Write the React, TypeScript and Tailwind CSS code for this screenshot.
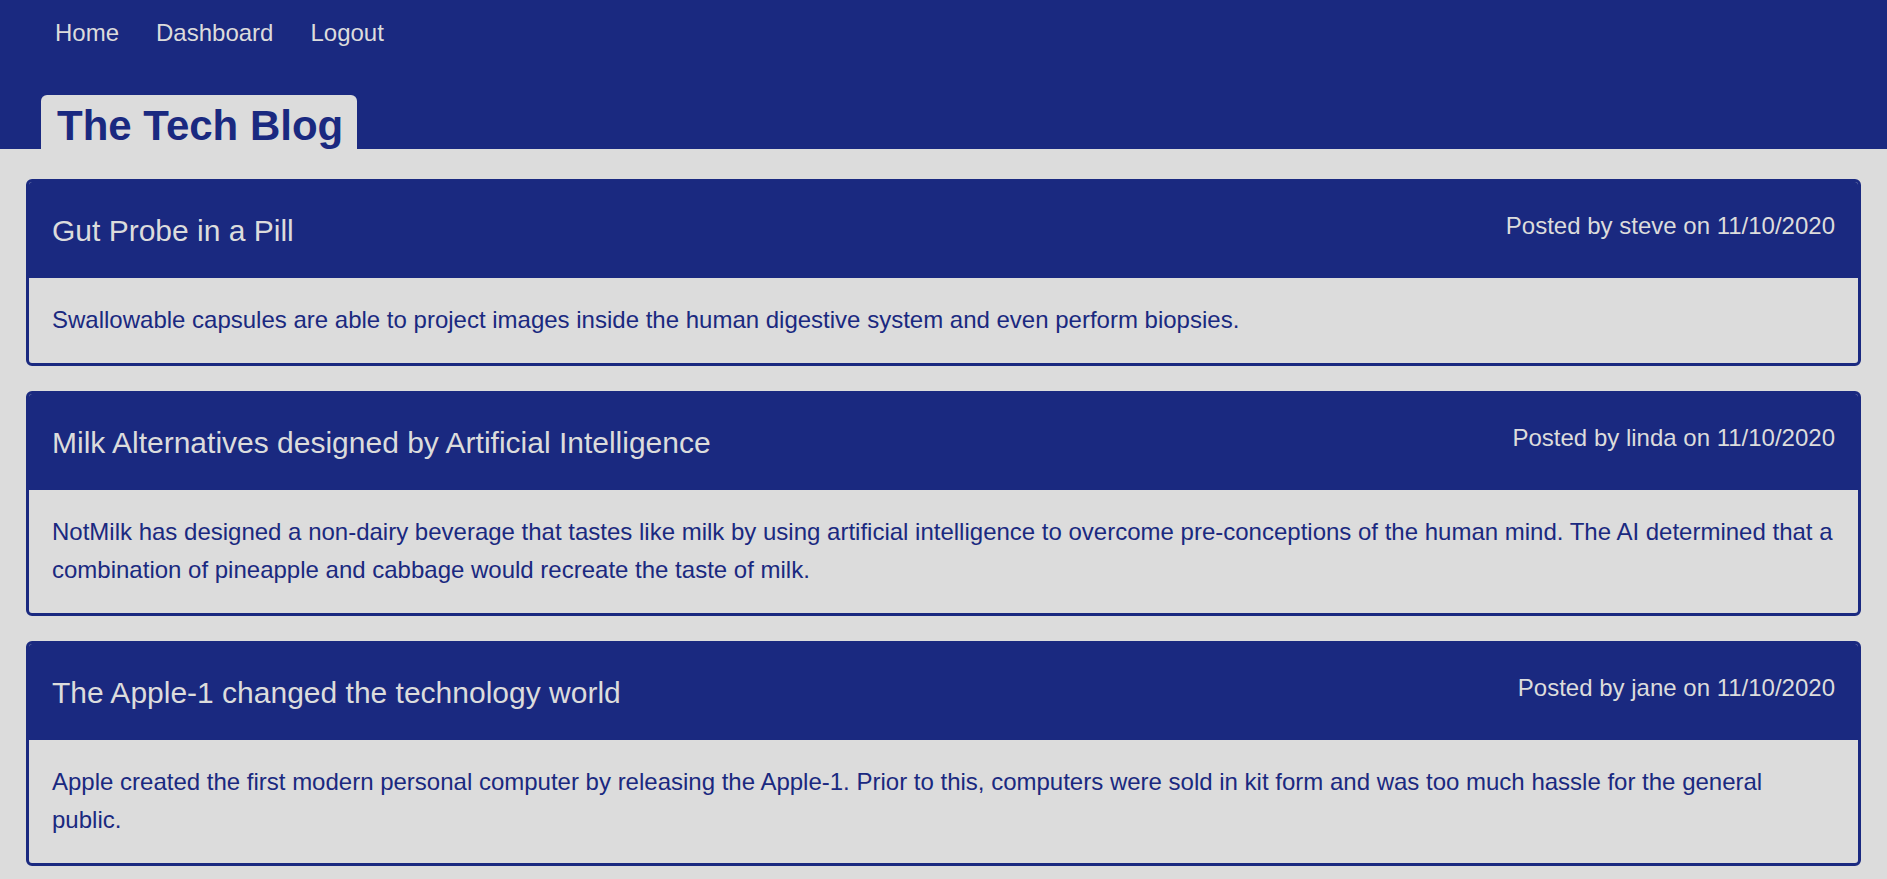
import React from "react";

interface Post {
  id: number;
  title: string;
  author: string;
  date: string;
  body: string;
}

// posts shown on the home page
const posts: Post[] = [
  {
    id: 1,
    title: "Gut Probe in a Pill",
    author: "steve",
    date: "11/10/2020",
    body: "Swallowable capsules are able to project images inside the human digestive system and even perform biopsies."
  },
  {
    id: 2,
    title: "Milk Alternatives designed by Artificial Intelligence",
    author: "linda",
    date: "11/10/2020",
    body: "NotMilk has designed a non-dairy beverage that tastes like milk by using artificial intelligence to overcome pre-conceptions of the human mind. The AI determined that a combination of pineapple and cabbage would recreate the taste of milk."
  },
  {
    id: 3,
    title: "The Apple-1 changed the technology world",
    author: "jane",
    date: "11/10/2020",
    body: "Apple created the first modern personal computer by releasing the Apple-1. Prior to this, computers were sold in kit form and was too much hassle for the general public."
  }
];

const navLinks = ["Home", "Dashboard", "Logout"];

const PostCard = ({ post }: { post: Post }) => (
  <article className="border-[3px] border-[#1a2980] rounded-[6px] overflow-hidden">
    {/* Card header */}
    <div className="flex justify-between items-start bg-[#1a2980] text-[#dcdcdc] px-[23px] pt-[25px] pb-[23px]">
      <h2 className="text-[30px] leading-[48px]">{post.title}</h2>
      <p className="text-[24px] leading-[38px]">
        Posted by {post.author} on {post.date}
      </p>
    </div>
    {/* Card body */}
    <div className="px-[23px] pt-[23px] pb-[24px] text-[#1a2980]">
      <p className="text-[24px] leading-[38px]">{post.body}</p>
    </div>
  </article>
);

export default function App() {
  return (
    <div
      className="min-h-screen bg-[#dcdcdc]"
      style={{ fontFamily: '"Liberation Sans", Arial, sans-serif' }}
    >
      <header className="bg-[#1a2980] pt-[19px]">
        <nav className="flex gap-[37px] pl-[55px]">
          {navLinks.map((link) => (
            <a key={link} href="#" className="text-[24px] leading-[28px] text-[#dcdcdc]">
              {link}
            </a>
          ))}
        </nav>
        <div className="mt-[48px] pl-[41px] flex">
          <h1 className="h-[54px] bg-[#dcdcdc] rounded-t-[6px] pl-[16px] pr-[14px] pt-[8px] text-[42px] leading-[46px] font-bold text-[#1a2980]">
            The Tech Blog
          </h1>
        </div>
      </header>

      <main className="flex flex-col gap-[25px] px-[26px] pt-[30px] pb-[13px]">
        {posts.map((post) => (
          <PostCard key={post.id} post={post} />
        ))}
      </main>
    </div>
  );
}
